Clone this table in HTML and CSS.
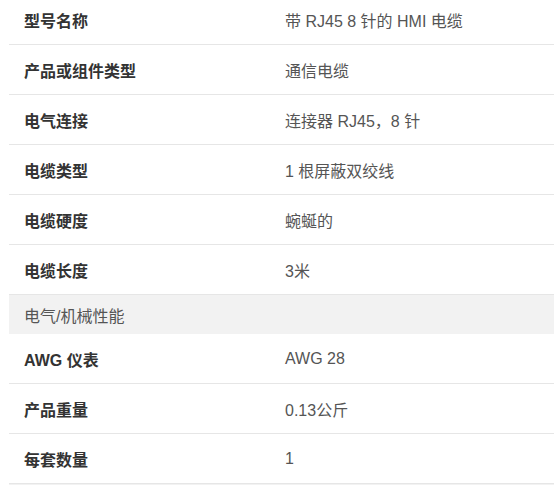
FILE: index.html
```html
<!DOCTYPE html>
<html lang="zh-CN">
<head>
<meta charset="utf-8">
<title>技术规格</title>
<link rel="stylesheet" href="styles.css">
</head>
<body>
<div class="specs">
  <div class="row"><div class="label">型号名称</div><div class="value">带 RJ45 8 针的 HMI 电缆</div></div>
  <div class="row"><div class="label">产品或组件类型</div><div class="value">通信电缆</div></div>
  <div class="row"><div class="label">电气连接</div><div class="value">连接器 RJ45，8 针</div></div>
  <div class="row"><div class="label">电缆类型</div><div class="value">1 根屏蔽双绞线</div></div>
  <div class="row"><div class="label">电缆硬度</div><div class="value">蜿蜒的</div></div>
  <div class="row"><div class="label">电缆长度</div><div class="value">3米</div></div>
  <div class="section">电气/机械性能</div>
  <div class="row"><div class="label">AWG 仪表</div><div class="value">AWG 28</div></div>
  <div class="row"><div class="label">产品重量</div><div class="value">0.13公斤</div></div>
  <div class="row"><div class="label">每套数量</div><div class="value">1</div></div>
  <div class="section section-next" aria-hidden="true"></div>
</div>
</body>
</html>
```
FILE: styles.css
```css
html, body {
  margin: 0;
  padding: 0;
  background: #ffffff;
  overflow: hidden;
}
body {
  padding-left: 9px;
  font-family: "Liberation Sans", "Noto Sans CJK SC", sans-serif;
  font-size: 16px;
}
.specs {
  margin-top: -5px;
  display: flex;
  flex-direction: column;
}
.row {
  display: grid;
  grid-template-columns: 276px 1fr;
  align-items: center;
  height: 49px;
  border-bottom: 1px solid #e6e6e6;
}
.label {
  padding-left: 15px;
  font-weight: bold;
  color: #333333;
}
.value {
  color: #555555;
}
.section {
  height: 39px;
  display: flex;
  align-items: center;
  padding-left: 15px;
  background: #f2f2f2;
  color: #555555;
}
```
